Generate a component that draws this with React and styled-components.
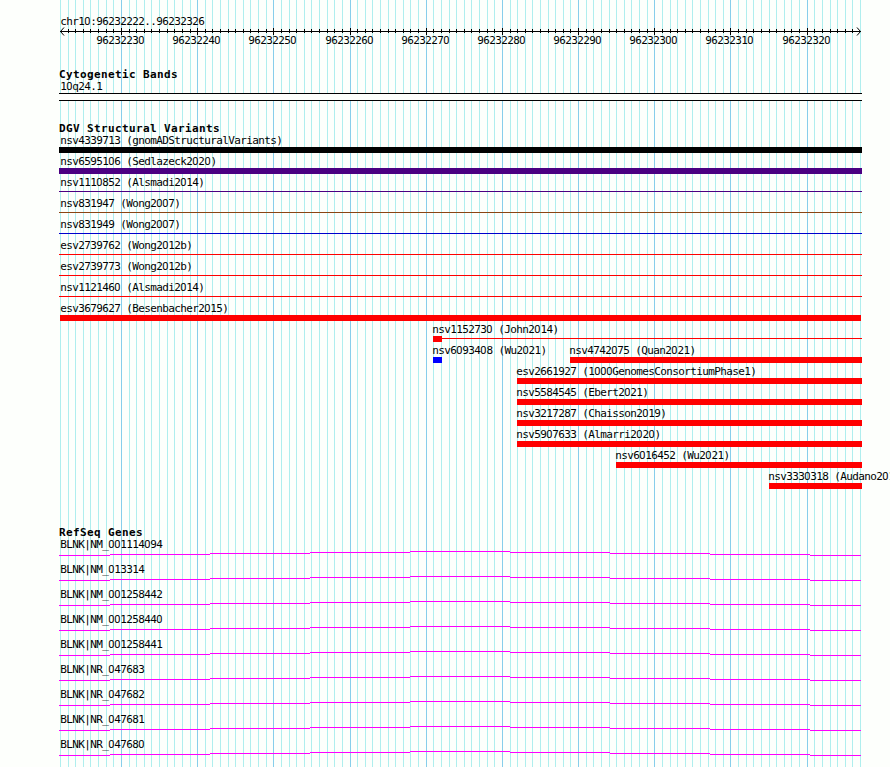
import React from "react";
import styled, { createGlobalStyle } from "styled-components";

const GlobalStyle = createGlobalStyle`
    body {
        margin: 0;
        background: #fdfffc;
        overflow: hidden;
    }
`;

const START = 96232222;
const END = 96232326;
const LEFT = 60;
const STEP = 800 / 105;

const lineX = (i) => Math.round(LEFT + i * STEP);
const lines = Array.from({ length: 106 }, (_, i) => ({
    pos: START + i,
    x: lineX(i),
    major: (START + i) % 10 === 0,
}));

const Browser = styled.div`
    position: relative;
    width: 890px;
    height: 767px;
    overflow: hidden;
    color: #000;
    font-family: "DejaVu Sans Mono", "Liberation Mono", monospace;
    font-size: 11px;
    line-height: 13px;
    letter-spacing: -0.622px;
    white-space: pre;
`;

const GridLines = styled.svg`
    position: absolute;
    top: 0;
    left: 0;
    z-index: -1;
`;

const RulerSvg = styled.svg`
    display: block;
    height: 68px;
    width: 890px;
`;

const Zero = styled.span`
    font-family: Roboto, sans-serif;
    letter-spacing: -0.178px;
`;

const Track = styled.section`
    margin-bottom: ${(p) => p.$gap}px;
`;

const Title = styled.h2`
    margin: 0 0 0 59px;
    height: 12px;
    font-size: 11px;
    line-height: 13px;
    font-weight: bold;
    letter-spacing: 0.378px;
`;

const Label = styled.div`
    height: 13px;
    margin-left: ${(p) => p.$indent}px;
`;

const Band = styled.div`
    box-sizing: border-box;
    width: 803px;
    height: 8px;
    margin-left: 59px;
    border: solid #000;
    border-width: 1px 0;
    background: #fdfffc;
`;

const VariantRow = styled.div`
    display: grid;
    height: 21px;
`;

const Feature = styled.div`
    grid-area: 1 / 1;
    margin-left: ${(p) => p.$start}px;
`;

const Glyph = styled.div`
    display: flex;
    align-items: flex-start;
    height: 6px;
`;

const Bar = styled.div`
    width: ${(p) => p.$width}px;
    height: 6px;
    background: ${(p) => p.$color};
`;

const Line = styled.div`
    width: ${(p) => p.$width}px;
    height: 1px;
    margin-top: 2px;
    background: ${(p) => p.$color};
`;

const GeneRow = styled.div`
    height: 25px;
`;

const GeneSvg = styled.svg`
    display: block;
    width: 890px;
    height: 5px;
`;

// plain zeros, the mono face has a dotted one
const Text = ({ children, as }) =>
    children.split(/(0+)/).map((part, i) =>
        part[0] === "0" ? <Zero as={as} key={i}>{part}</Zero> : part
    );

const variants = [
    [{ name: "nsv4339713 (gnomADStructuralVariants)", start: 59, end: 862, color: "#000000" }],
    [{ name: "nsv6595106 (Sedlazeck2020)", start: 59, end: 862, color: "#4b0082" }],
    [{ name: "nsv1110852 (Alsmadi2014)", start: 59, end: 862, color: "#4b0082", thin: true }],
    [{ name: "nsv831947 (Wong2007)", start: 59, end: 862, color: "#8b4513", thin: true }],
    [{ name: "nsv831949 (Wong2007)", start: 59, end: 862, color: "#0000cd", thin: true }],
    [{ name: "esv2739762 (Wong2012b)", start: 59, end: 862, color: "#ff0000", thin: true }],
    [{ name: "esv2739773 (Wong2012b)", start: 59, end: 862, color: "#ff0000", thin: true }],
    [{ name: "nsv1121460 (Alsmadi2014)", start: 59, end: 862, color: "#ff0000", thin: true }],
    [{ name: "esv3679627 (Besenbacher2015)", start: 60, end: 861, color: "#ff0000" }],
    [{ name: "nsv1152730 (John2014)", start: 433, end: 442, tail: 862, color: "#ff0000" }],
    [
        { name: "nsv6093408 (Wu2021)", start: 433, end: 442, color: "#0000ff" },
        { name: "nsv4742075 (Quan2021)", start: 570, end: 862, color: "#ff0000" },
    ],
    [{ name: "esv2661927 (1000GenomesConsortiumPhase1)", start: 517, end: 862, color: "#ff0000" }],
    [{ name: "nsv5584545 (Ebert2021)", start: 517, end: 862, color: "#ff0000" }],
    [{ name: "nsv3217287 (Chaisson2019)", start: 517, end: 862, color: "#ff0000" }],
    [{ name: "nsv5907633 (Almarri2020)", start: 517, end: 862, color: "#ff0000" }],
    [{ name: "nsv6016452 (Wu2021)", start: 616, end: 862, color: "#ff0000" }],
    [{ name: "nsv3330318 (Audano2019)", start: 769, end: 862, color: "#ff0000" }],
];

const genes = [
    "BLNK|NM_001114094",
    "BLNK|NM_013314",
    "BLNK|NM_001258442",
    "BLNK|NM_001258440",
    "BLNK|NM_001258441",
    "BLNK|NR_047683",
    "BLNK|NR_047682",
    "BLNK|NR_047681",
    "BLNK|NR_047680",
];

// x edges of the intron steps, the middle one is the highest
const steps = [59, 110, 210, 310, 410, 510, 610, 710, 810, 861];

const Grid = () => (
    <GridLines width="890" height="767" shapeRendering="crispEdges">
        {lines.map((l) => (
            <rect key={l.pos} x={l.x} y="0" width="1" height="767" fill={l.major ? "#87ceeb" : "#afeeee"} />
        ))}
    </GridLines>
);

const Ruler = () => (
    <RulerSvg>
        <text x="60.3" y="25"><Text as="tspan">{`chr10:${START}..${END}`}</Text></text>
        <g shapeRendering="crispEdges">
            <rect x="60" y="31" width="801" height="1" />
            {lines.slice(1, 105).map((l) => (
                <rect key={l.pos} x={l.x} y={l.major ? 28 : 29} width="1" height={l.major ? 7 : 4} />
            ))}
        </g>
        <path d="M64 27.5 L60.5 31.5 L64 35.5 M857 27.5 L860.5 31.5 L857 35.5" fill="none" stroke="#000" />
        {lines.filter((l) => l.major).map((l) => (
            <text key={l.pos} x={l.x - 24.7} y="44"><Text as="tspan">{String(l.pos)}</Text></text>
        ))}
    </RulerSvg>
);

const Variant = ({ item }) => (
    <Feature $start={item.start}>
        <Label $indent={Math.max(60.3, item.start - 0.7) - item.start}><Text>{item.name}</Text></Label>
        <Glyph>
            {item.thin
                ? <Line $width={item.end - item.start} $color={item.color} />
                : <Bar $width={item.end - item.start} $color={item.color} />}
            {item.tail && <Line $width={item.tail - item.end} $color={item.color} />}
        </Glyph>
    </Feature>
);

const Gene = ({ name }) => (
    <GeneRow>
        <Label $indent={60.3}><Text>{name}</Text></Label>
        <GeneSvg shapeRendering="crispEdges">
            {steps.slice(0, -1).map((x, i) => (
                <rect key={x} x={x} y={Math.abs(i - 4)} width={steps[i + 1] - x} height="1" fill="#ff00ff" />
            ))}
        </GeneSvg>
    </GeneRow>
);

const App = () => {
    return (
        <>
            <GlobalStyle />
            <Browser>
                <Grid />
                <Ruler />
                <Track $gap={21}>
                    <Title>Cytogenetic Bands</Title>
                    <Label $indent={60.3}><Text>10q24.1</Text></Label>
                    <Band />
                </Track>
                <Track $gap={35}>
                    <Title>DGV Structural Variants</Title>
                    {variants.map((row) => (
                        <VariantRow key={row[0].name}>
                            {row.map((item) => <Variant key={item.name} item={item} />)}
                        </VariantRow>
                    ))}
                </Track>
                <Track $gap={0}>
                    <Title>RefSeq Genes</Title>
                    {genes.map((name) => <Gene key={name} name={name} />)}
                </Track>
            </Browser>
        </>
    );
};

export default App;
